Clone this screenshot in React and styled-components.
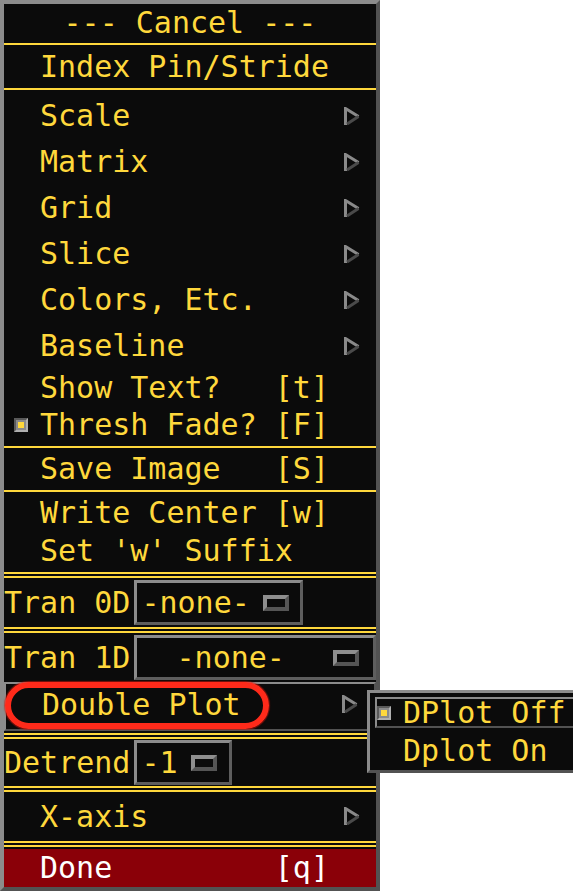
import React from "react";
import styled, { createGlobalStyle } from "styled-components";

const YELLOW = "#ffd83c";
const LIGHT = "#8c8c8c";
const DARK = "#525252";
const BG = "#0b0b0b";

const GlobalStyle = createGlobalStyle`
  html, body {
    margin: 0;
    padding: 0;
    background: #ffffff;
    overflow: hidden;
  }
`;

const Page = styled.div`
  position: relative;
  width: 573px;
  height: 893px;
  overflow: hidden;
  font-family: "DejaVu Sans Mono", "Liberation Mono", monospace;
  font-size: 30px;
  line-height: 1;
  color: ${YELLOW};
`;

const Menu = styled.div`
  width: 372px;
  border: 4px solid;
  border-color: ${LIGHT} ${DARK} ${DARK} ${LIGHT};
  background: ${BG};
  display: flex;
  flex-direction: column;
`;

const Sep = styled.div`
  flex: none;
  height: ${(p) => (p.$double ? 6 : 2)}px;
  box-sizing: border-box;
  border-top: 2px solid ${YELLOW};
  border-bottom: ${(p) => (p.$double ? `2px solid ${YELLOW}` : "0")};
`;

const Group = styled.div`
  display: flex;
  flex-direction: column;
  padding: ${(p) => p.$pad || "0"};
`;

const Row = styled.div`
  flex: none;
  height: ${(p) => p.$h}px;
  box-sizing: border-box;
  display: flex;
  align-items: center;
  padding: 0 16px ${(p) => (p.$armed ? 4 : 0)}px 10px;
  margin-bottom: ${(p) => p.$mb || 0}px;
  background: ${(p) => p.$bg || "transparent"};
  color: ${(p) => p.$color || YELLOW};
  border: ${(p) => (p.$armed ? "2px solid" : "0")};
  border-color: ${LIGHT} ${DARK} ${DARK} ${LIGHT};
`;

const CenterRow = styled.div`
  flex: none;
  height: ${(p) => p.$h}px;
  box-sizing: border-box;
  padding-bottom: 2px;
  display: flex;
  align-items: center;
  justify-content: center;
  white-space: pre;
`;

const Lead = styled.span`
  flex: none;
  width: ${(p) => p.$w || 26}px;
  display: flex;
  align-items: center;
`;

const Label = styled.span`
  flex: 1;
  white-space: pre;
`;

const Check = styled.span`
  width: 14px;
  height: 14px;
  box-sizing: border-box;
  border: 2px solid;
  border-color: #5a5a5a #b0b0b0 #b0b0b0 #5a5a5a;
  background: #8a8a8a;
  display: flex;
  align-items: center;
  justify-content: center;

  &::after {
    content: "";
    width: 6px;
    height: 6px;
    background: ${YELLOW};
  }
`;

const OptionRow = styled.div`
  flex: none;
  height: ${(p) => p.$h}px;
  display: flex;
  align-items: center;
  white-space: pre;
`;

const OptionBox = styled.div`
  margin-left: 4px;
  width: ${(p) => p.$w}px;
  height: 45px;
  box-sizing: border-box;
  border: 3px solid;
  border-color: ${LIGHT} #5e5e5e #5e5e5e ${LIGHT};
  display: flex;
  align-items: center;
  gap: 13px;
  padding: 0 14px 0 4px;
`;

const OptionText = styled.span`
  white-space: pre;
  flex: ${(p) => (p.$fill ? 1 : "none")};
  text-align: center;
`;

const OptionMark = styled.span`
  flex: none;
  width: 26px;
  height: 16px;
  box-sizing: border-box;
  border: 4px solid;
  border-color: #8e8e8e #555555 #555555 #8e8e8e;
  background: ${BG};
`;

const Annotation = styled.span`
  position: absolute;
  left: 5px;
  top: 682px;
  width: 264px;
  height: 47px;
  box-sizing: border-box;
  border: 6px solid #ff2a1a;
  border-radius: 24px;
  box-shadow: 0 0 1px 1px rgba(200, 20, 10, 0.6);
  pointer-events: none;
`;

const Popup = styled.div`
  position: absolute;
  left: 367px;
  top: 690px;
  width: 212px;
  height: 83px;
  box-sizing: border-box;
  border: 3px solid;
  border-color: ${LIGHT} ${DARK} ${DARK} ${LIGHT};
  background: ${BG};
  padding: 4px 0 0 5px;
  display: flex;
  flex-direction: column;
`;

const PopupItem = styled.div`
  height: ${(p) => p.$h}px;
  box-sizing: border-box;
  display: flex;
  align-items: center;
  padding-left: ${(p) => (p.$armed ? 0 : 2)}px;
  border: ${(p) => (p.$armed ? "2px solid" : "0")};
  border-color: ${LIGHT} ${DARK} ${DARK} ${LIGHT};
  margin-bottom: ${(p) => p.$mb || 0}px;
  white-space: pre;
`;

function Arrow() {
  return (
    <svg width="16" height="19" viewBox="0 0 16 19">
      <polygon points="1.5,1.5 14.5,9.5 1.5,17.5" fill={BG} />
      <path d="M1.5 18 V1.5 L14.5 9.5" stroke="#8a8a8a" strokeWidth="3" fill="none" />
      <path d="M3 17 L14.5 9.5" stroke="#4a4a4a" strokeWidth="3" fill="none" />
    </svg>
  );
}

function Item({ label, h = 46, cascade, checked, ...rest }) {
  return (
    <Row $h={h} {...rest}>
      <Lead>{checked && <Check />}</Lead>
      <Label>{label}</Label>
      {cascade && <Arrow />}
    </Row>
  );
}

export default function App() {
  return (
    <Page>
      <GlobalStyle />
      <Menu>
        <CenterRow $h={39}>--- Cancel ---</CenterRow>
        <Sep />
        <Item label="Index Pin/Stride" h={43} />
        <Sep />
        <Group $pad="3px 0 3px 0">
          <Item label="Scale" cascade />
          <Item label="Matrix" cascade />
          <Item label="Grid" cascade />
          <Item label="Slice" cascade />
          <Item label="Colors, Etc." cascade />
          <Item label="Baseline" cascade />
          <Item label="Show Text?   [t]" h={37} />
          <Item label="Thresh Fade? [F]" h={37} checked />
        </Group>
        <Sep />
        <Item label="Save Image   [S]" h={42} />
        <Sep />
        <Group $pad="2px 0">
          <Item label="Write Center [w]" h={38} />
          <Item label="Set 'w' Suffix" h={38} />
        </Group>
        <Sep $double />
        <OptionRow $h={49}>
          Tran 0D
          <OptionBox $w={169}>
            <OptionText>-none-</OptionText>
            <OptionMark />
          </OptionBox>
        </OptionRow>
        <Sep $double />
        <OptionRow $h={49}>
          Tran 1D
          <OptionBox $w={242}>
            <OptionText $fill>-none-</OptionText>
            <OptionMark />
          </OptionBox>
        </OptionRow>
        <Item label="Double Plot" h={49} cascade $armed $mb={2} />
        <Sep $double />
        <OptionRow $h={47}>
          Detrend
          <OptionBox $w={98}>
            <OptionText>-1</OptionText>
            <OptionMark />
          </OptionBox>
        </OptionRow>
        <Sep $double />
        <Item label="X-axis" h={49} cascade />
        <Sep $double />
        <Row $h={38} $bg="#8a0008" $color="#ffffff" style={{ marginTop: 2 }}>
          <Lead />
          <Label>Done         [q]</Label>
        </Row>
      </Menu>
      <Annotation />
      <Popup>
        <PopupItem $h={31} $armed $mb={4}>
          <Lead $w={26}>
            <Check />
          </Lead>
          DPlot Off
        </PopupItem>
        <PopupItem $h={38}>
          <Lead $w={26} />
          Dplot On
        </PopupItem>
      </Popup>
    </Page>
  );
}
